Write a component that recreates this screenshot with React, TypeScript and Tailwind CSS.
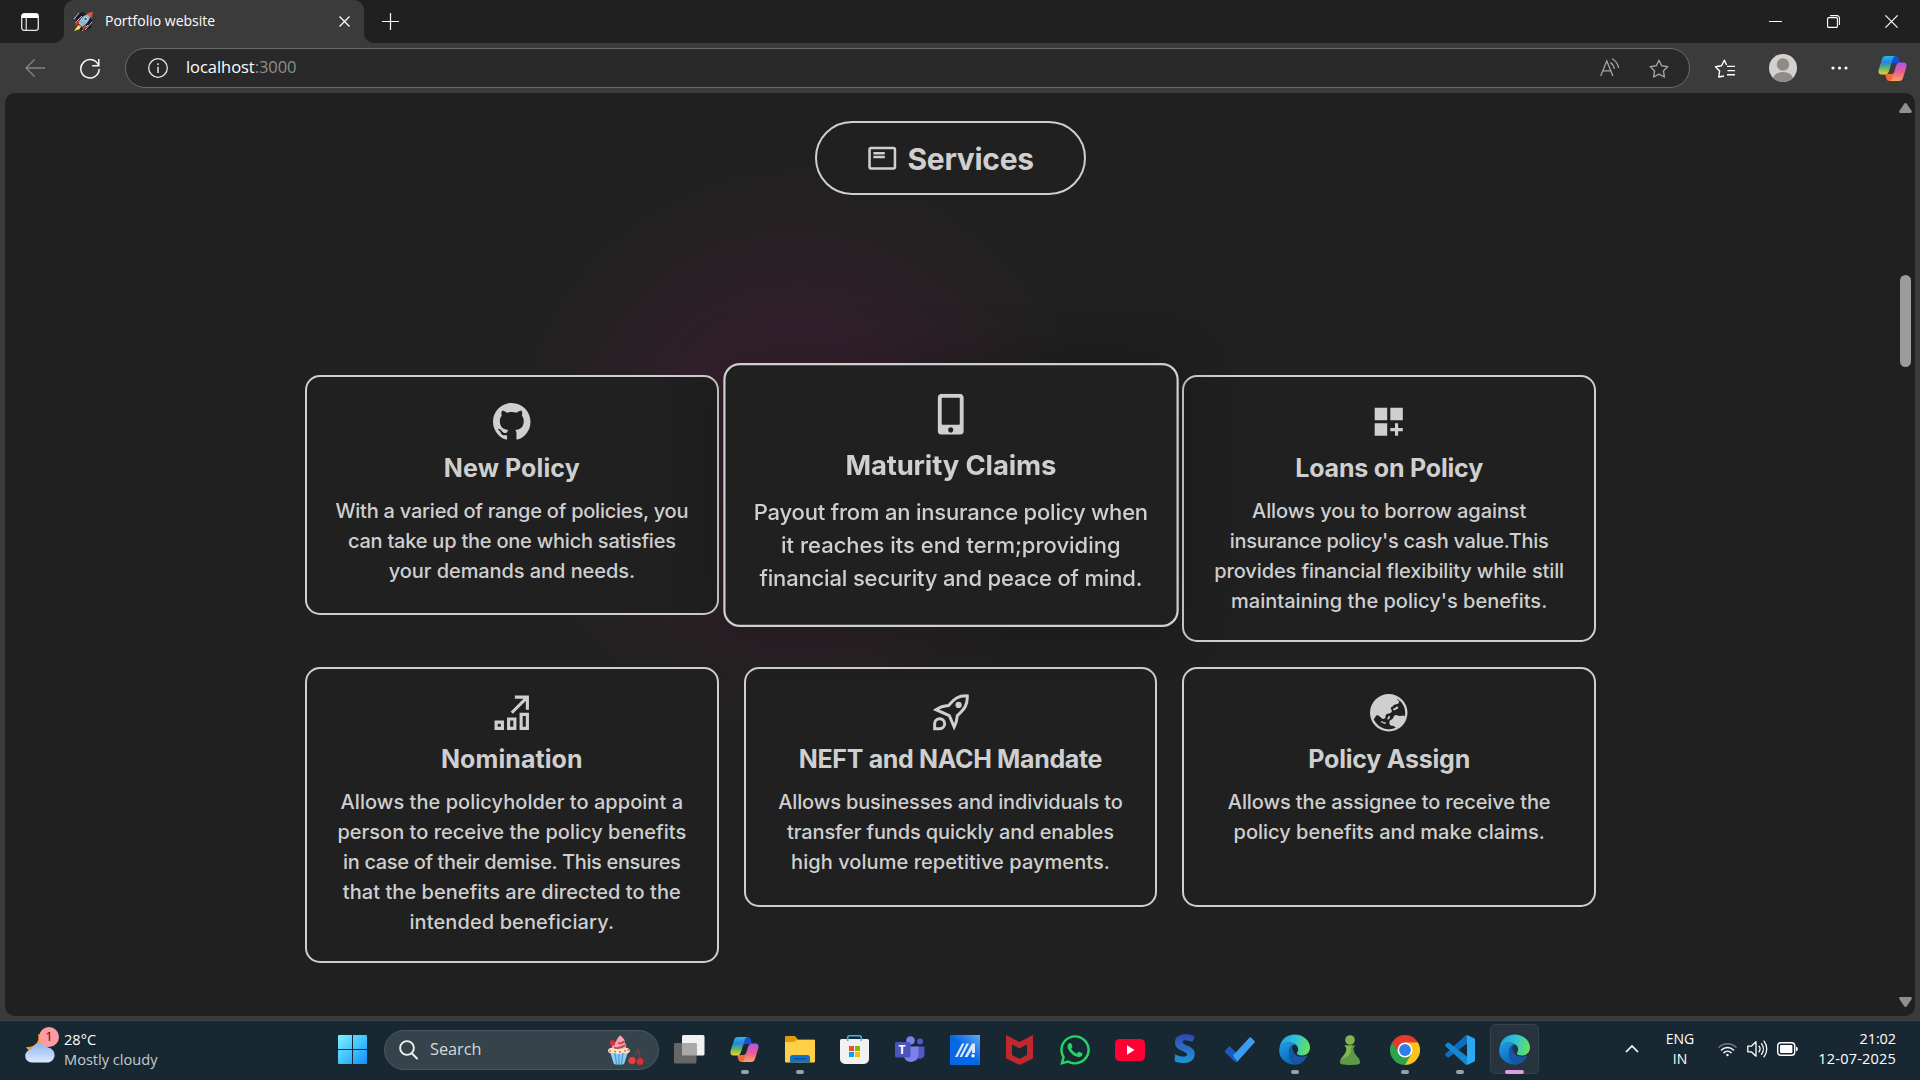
import type { ReactNode } from "react";
import { MdOutlineFeaturedPlayList, MdDashboardCustomize } from "react-icons/md";
import { BsGithub, BsGlobeAsiaAustralia } from "react-icons/bs";
import { FaMobileAlt, FaWhatsapp } from "react-icons/fa";

/* ---------- Browser chrome ---------- */

function RocketFavicon() {
  return (
    <svg width="21" height="21" viewBox="0 0 21 21">
      <path d="M3 4 10 1 19 9 18 17 10 20 3 17Z" fill="#17182a" />
      <path d="M1 8 6 2M2 12 9 5M12 19l7-8M9 20l6-6" stroke="#c9cad6" strokeWidth="1" />
      <path d="M5 12C7 7 12 3 17 3c1 5-3 10-8 13Z" fill="#8fb8cf" />
      <path d="M14 2.500 20 .500 18.500 7C17 6 15 4.500 14 2.500Z" fill="#e8533c" />
      <path d="M6 9 2.500 11 2 15l4-2ZM9 16l1 4 3-3v-4Z" fill="#c9362c" />
      <circle cx="12.500" cy="8" r="1.800" fill="#2d5f92" stroke="#e3eef5" strokeWidth=".8" />
      <path d="M5 14 1 20l6-2 1-3Z" fill="#f5d64b" />
    </svg>
  );
}

function CopilotIcon({ id }: { id: string }) {
  return (
    <svg width="29" height="27" viewBox="0 0 29 27">
      <defs>
        <linearGradient id={`${id}a`} x1="0" y1="0" x2="0" y2="1">
          <stop offset="0" stopColor="#2cb5e8" />
          <stop offset=".35" stopColor="#2486dd" />
          <stop offset=".65" stopColor="#5fb869" />
          <stop offset="1" stopColor="#f6cf2d" />
        </linearGradient>
        <linearGradient id={`${id}b`} x1="0" y1="0" x2="0" y2="1">
          <stop offset="0" stopColor="#a855f0" />
          <stop offset=".5" stopColor="#ea5c93" />
          <stop offset="1" stopColor="#fba45e" />
        </linearGradient>
      </defs>
      <path d="M14 1h3.500c2 0 2.800 1.200 3.300 3l1 4H16c-2 0-3 1-3.500 3Z" fill="#1b4fd0" />
      <path d="M15 26h-3.500c-2 0-2.800-1.200-3.300-3l-1-4H13c2 0 3-1 3.500-3Z" fill="#ef6a3c" />
      <path d="M8 1h9.500c-2 .3-2.500 2-3 3.500L11 16c-.8 2.500-2 3.500-4.500 3.500H3.600C1 19.500 0 17.500.6 15L4 4c.6-2 1.800-3 4-3Z" fill={`url(#${id}a)`} />
      <path d="M21 26h-9.500c2-.3 2.500-2 3-3.500L18 11c.8-2.500 2-3.500 4.500-3.500h2.900c2.600 0 3.600 2 3 4.500L25 23c-.6 2-1.800 3-4 3Z" fill={`url(#${id}b)`} />
    </svg>
  );
}

const STAR = "M11 2.200l2.700 5.500 6.100.9-4.400 4.300 1 6.100L11 16.100 5.600 19l1-6.100L2.200 8.600l6.100-.9Z";

function TitleBar() {
  return (
    <div className="flex h-[43px] bg-[#202020] text-white">
      <div className="flex h-full w-[64px] bg-[#3b3b3b]">
        <div className="flex h-full w-full items-center rounded-br-[10px] bg-[#202020] pl-[21px]">
          <svg width="18" height="18" viewBox="0 0 18 18" fill="none">
            <rect x=".7" y=".7" width="16.600" height="16.600" rx="2.500" stroke="#e6e6e6" strokeWidth="1.300" />
            <path d="M.7 5V3A2.300 2.300 0 0 1 3 .7h12A2.300 2.300 0 0 1 17.300 3v2Z" fill="#fff" />
            <path d="M5.200 5v12" stroke="#e6e6e6" strokeWidth="1.200" />
          </svg>
        </div>
      </div>
      <div className="flex h-full w-[300px] items-center rounded-t-[10px] bg-[#3b3b3b] pb-px pl-[9px]">
        <RocketFavicon />
        <span className="ml-[11px] flex-1 pb-[2px] text-[14px] whitespace-nowrap">Portfolio website</span>
        <svg className="mr-[14px]" width="11" height="11" viewBox="0 0 11 11" stroke="#fff" strokeWidth="1.300">
          <path d="M.5.5l10 10M10.500.5l-10 10" />
        </svg>
      </div>
      <div className="h-full flex-1 bg-[#3b3b3b]">
        <div className="flex h-full w-full items-center rounded-bl-[10px] bg-[#202020] pb-px">
          <svg className="ml-[18px]" width="17" height="17" viewBox="0 0 17 17" stroke="#fff" strokeWidth="1.200">
            <path d="M8.500 0v17M0 8.500h17" />
          </svg>
          <div className="ml-auto flex items-center pr-[22px]">
            <div className="mr-[45px] h-px w-[13px] bg-white" />
            <svg className="mr-[45px]" width="13" height="13" viewBox="0 0 13 13" fill="none" stroke="#fff" strokeWidth="1.100">
              <rect x=".6" y="2.600" width="9.800" height="9.800" rx="1" />
              <path d="M3 .6h7a2.400 2.400 0 0 1 2.400 2.400v7" />
            </svg>
            <svg width="13" height="13" viewBox="0 0 13 13" stroke="#fff" strokeWidth="1.200">
              <path d="M.4.4l12.200 12.200M12.600.4.4 12.600" />
            </svg>
          </div>
        </div>
      </div>
    </div>
  );
}

function AddressRow() {
  return (
    <div className="flex h-[50px] items-center">
      <svg className="ml-[25px]" width="20" height="18" viewBox="0 0 20 18" fill="none" stroke="#858585" strokeWidth="1.300">
        <path d="M20 9H1M9.500.5 1 9l8.500 8.500" />
      </svg>
      <svg className="ml-[35px]" width="20" height="21" viewBox="0 0 20 21" fill="none" stroke="#f5f5f5" strokeWidth="1.500">
        <path d="M18.600 7.500A9.200 9.200 0 1 0 19.200 11M18.800 1v6.700h-6.500" />
      </svg>
      <div className="ml-[25px] flex h-[40px] w-[1565px] items-center rounded-full border border-[#6b6b6b] bg-[#292929]">
        <svg className="ml-[22px]" width="20" height="20" viewBox="0 0 20 20" fill="none" stroke="#e8e8e8" strokeWidth="1.300">
          <circle cx="10" cy="10" r="9.300" />
          <path d="M10 8.800V15M10 5.200v1.700" strokeWidth="1.500" />
        </svg>
        <span className="ml-[18px] pb-px text-[16.5px] tracking-[-0.05px] text-white">
          localhost<span className="text-[#8f8f8f]">:3000</span>
        </span>
        <div className="ml-auto flex items-center pr-[19px] text-[#a3a3a3]">
          <svg className="mr-[28px]" width="20" height="20" viewBox="0 0 20 20" fill="none" stroke="currentColor" strokeWidth="1.300">
            <path d="M.7 18 6.800 3l6.100 15M2.800 12.800h8" />
            <path d="M10.500 4.600a9 9 0 0 1 3.800 6.200M12 .8a13 13 0 0 1 6.600 9" />
          </svg>
          <svg width="22" height="21" viewBox="0 0 22 21" fill="none" stroke="currentColor" strokeWidth="1.400" strokeLinejoin="round">
            <path d={STAR} />
          </svg>
        </div>
      </div>
      <svg className="ml-[24px]" width="22" height="21" viewBox="0 0 22 21" fill="none" stroke="#fff" strokeWidth="1.400" strokeLinejoin="round">
        <path d="M10 18 4.800 19l.8-6L1.500 8.700l6-1L10.300 2.200l2.300 4.800M13 8.400h8M13.500 12.600H21M13 16.800h8" />
      </svg>
      <svg className="ml-[33px]" width="28" height="28" viewBox="0 0 28 28">
        <clipPath id="avatarClip"><circle cx="14" cy="14" r="14" /></clipPath>
        <circle cx="14" cy="14" r="14" fill="#d3d0cd" />
        <g clipPath="url(#avatarClip)" fill="#8f8b87">
          <circle cx="14" cy="10.500" r="6.200" />
          <ellipse cx="14" cy="25" rx="10" ry="7" />
        </g>
      </svg>
      <svg className="ml-[34px]" width="17" height="4" viewBox="0 0 17 4" fill="#fff">
        <circle cx="2" cy="2" r="1.600" /><circle cx="8.500" cy="2" r="1.600" /><circle cx="15" cy="2" r="1.600" />
      </svg>
      <div className="ml-[30px]"><CopilotIcon id="side" /></div>
    </div>
  );
}

/* ---------- Services page ---------- */

function GrowthIcon() {
  return (
    <svg width="37.500" height="37.500" viewBox="0 0 24 24" fill="none" stroke="currentColor" strokeWidth="2">
      <path d="M2 18h4v4H2zM10 16h4v6h-4zM18 13h4v9h-4zM14 2h8v8M22 2 12 12" />
    </svg>
  );
}

function LaunchIcon() {
  return (
    <svg width="37.500" height="37.500" viewBox="0 0 24 24" fill="none" stroke="currentColor" strokeWidth="1.900">
      <path d="M22.600 1.200C16.500 1 14.500 3 10.700 7.300 7 7.500 5 8.300 2.500 10l8.600 3.900L14.200 21.200c1.200-2.300 1.800-4.600 2-7.400C20.800 9.800 22.800 7 22.600 1.200Z" />
      <path d="M1.700 22.200v-3.300a3.200 3.200 0 1 1 3.200 3.300Z" />
      <circle cx="17" cy="7" r="2" fill="currentColor" stroke="none" />
    </svg>
  );
}

type Line = { text: string; fit: string };
type CardProps = { icon: ReactNode; title: string; titleFit: string; lines: Line[]; className?: string };

function ServiceCard({ icon, title, titleFit, lines, className = "" }: CardProps) {
  return (
    <div className={`min-h-[240px] self-start rounded-[15px] border-2 border-[#cfcfcf] bg-[#202020] px-[25px] text-center whitespace-nowrap text-[#cfcfcf] ${className}`}>
      <div className="flex h-[38px] justify-center">{icon}</div>
      <h3 className={`mt-[9px] text-[25px] leading-[37px] font-bold ${titleFit}`}>{title}</h3>
      <p className="mt-[9px] text-[20px] leading-[30px] font-[450]">
        {lines.map((l) => (
          <span key={l.text} className={`-mx-4 block ${l.fit}`}>{l.text}</span>
        ))}
      </p>
    </div>
  );
}

const cards: CardProps[] = [
  {
    icon: <BsGithub size={37.5} />,
    title: "New Policy",
    titleFit: "tracking-[0.1px]",
    className: "pt-[26px] pb-[24px]",
    lines: [
      { text: "With a varied of range of policies, you", fit: "tracking-[-0.23px]" },
      { text: "can take up the one which satisfies", fit: "tracking-[-0.23px]" },
      { text: "your demands and needs.", fit: "tracking-[-0.07px]" },
    ],
  },
  {
    icon: <FaMobileAlt size={37.5} />,
    title: "Maturity Claims",
    titleFit: "tracking-[-0.14px]",
    className: "relative z-10 scale-110 pt-[25.5px] pb-[24px] shadow-[0_0_50px_rgba(0,0,0,0.25)]",
    lines: [
      { text: "Payout from an insurance policy when", fit: "tracking-[-0.17px]" },
      { text: "it reaches its end term;providing", fit: "tracking-[0px]" },
      { text: "financial security and peace of mind.", fit: "tracking-[-0.14px]" },
    ],
  },
  {
    icon: <MdDashboardCustomize size={37.5} />,
    title: "Loans on Policy",
    titleFit: "tracking-[-0.2px]",
    className: "pt-[26px] pb-[24px]",
    lines: [
      { text: "Allows you to borrow against", fit: "tracking-[-0.08px]" },
      { text: "insurance policy's cash value.This", fit: "tracking-[-0.27px]" },
      { text: "provides financial flexibility while still", fit: "tracking-[-0.12px]" },
      { text: "maintaining the policy's benefits.", fit: "tracking-[0.01px]" },
    ],
  },
  {
    icon: <GrowthIcon />,
    title: "Nomination",
    titleFit: "tracking-[0.08px]",
    className: "pt-[25px] pb-[24px]",
    lines: [
      { text: "Allows the policyholder to appoint a", fit: "tracking-[0.04px]" },
      { text: "person to receive the policy benefits", fit: "tracking-[0.02px]" },
      { text: "in case of their demise. This ensures", fit: "tracking-[-0.35px]" },
      { text: "that the benefits are directed to the", fit: "tracking-[0.05px]" },
      { text: "intended beneficiary.", fit: "tracking-[0.1px]" },
    ],
  },
  {
    icon: <LaunchIcon />,
    title: "NEFT and NACH Mandate",
    titleFit: "tracking-[-0.34px]",
    className: "pt-[25px] pb-[24px]",
    lines: [
      { text: "Allows businesses and individuals to", fit: "tracking-[-0.15px]" },
      { text: "transfer funds quickly and enables", fit: "tracking-[-0.12px]" },
      { text: "high volume repetitive payments.", fit: "tracking-[0.05px]" },
    ],
  },
  {
    icon: <BsGlobeAsiaAustralia size={37.5} />,
    title: "Policy Assign",
    titleFit: "tracking-[-0.22px]",
    className: "pt-[25px] pb-[24px]",
    lines: [
      { text: "Allows the assignee to receive the", fit: "tracking-[-0.1px]" },
      { text: "policy benefits and make claims.", fit: "tracking-[-0.01px]" },
    ],
  },
];

function ServicesPage() {
  return (
    <div className="relative mr-[5px] ml-[5px] h-[923px] overflow-hidden rounded-[10px] bg-[#202020] font-['Inter',sans-serif]">
      <div className="absolute top-[52px] left-[487px] h-[610px] w-[610px] rounded-full bg-[radial-gradient(closest-side,#3b2033_0%,#382030_20%,#32202c_40%,#2a2026_60%,#242022_80%,#202020_100%)]" />
      <div className="relative flex flex-col items-start pt-[28px] pl-[300px]">
        <div className="ml-[510px] flex h-[74px] w-[271px] items-center rounded-full border-2 border-[#cfcfcf] bg-[#202020] pl-[50px] text-[#cfcfcf]">
          <MdOutlineFeaturedPlayList size={30.5} />
          <h2 className="ml-[10px] pt-[2px] text-[30px] leading-[40px] font-bold tracking-[-0.3px]">Services</h2>
        </div>
        <div className="mt-[180px] grid w-[1291px] grid-cols-3 gap-[25px]">
          {cards.map((c) => (
            <ServiceCard key={c.title} {...c} />
          ))}
        </div>
      </div>
      <div className="absolute top-0 right-0 flex h-full w-[20px] flex-col items-center pt-[10px] pb-[9px]">
        <svg width="13" height="10" viewBox="0 0 13 10" fill="#8f8f8f"><path d="M6.500 0c.6 0 1 .3 1.300.8l4.700 7c.7 1.200.2 2.200-1 2.200H1.500C.2 10-.2 9 .5 7.800l4.700-7C5.500.3 5.900 0 6.500 0Z" /></svg>
        <div className="mt-[162px] h-[92px] w-[11px] rounded-full bg-[#9b9b9b]" />
        <svg className="mt-auto" width="13" height="10" viewBox="0 0 13 10" fill="#8f8f8f"><path d="M6.500 10c.6 0 1-.3 1.300-.8l4.700-7C13.200 1 12.700 0 11.500 0h-10C.2 0-.2 1 .5 2.200l4.700 7c.3.500.7.8 1.300.8Z" /></svg>
      </div>
    </div>
  );
}

/* ---------- Taskbar icons ---------- */

function WeatherIcon() {
  return (
    <div className="relative h-[36px] w-[34px]">
      <svg className="absolute top-[6px] left-0" width="31" height="30" viewBox="0 0 31 30">
        <defs>
          <linearGradient id="cloudFill" x1="0" y1="0" x2="0" y2="1">
            <stop offset="0" stopColor="#8db4f2" /><stop offset="1" stopColor="#dbe8fc" />
          </linearGradient>
        </defs>
        <path d="M13 1c2 8-3 14-12 13 3 7 14 6 17-1S18 2 13 1Z" fill="#f2a21c" />
        <path d="M7 29.500a6.500 6.500 0 0 1-.5-13A9 9 0 0 1 23 14.500a7.600 7.600 0 0 1 .5 15Z" fill="url(#cloudFill)" />
      </svg>
      <div className="absolute top-0 left-[14px] flex size-[20px] items-center justify-center rounded-full bg-[#ff99a4] text-[13px] text-[#222]">1</div>
    </div>
  );
}

function WindowsIcon() {
  return (
    <svg width="29" height="29" viewBox="0 0 29 29">
      <defs>
        <linearGradient id="winFill" x1="0" y1="0" x2="1" y2="1">
          <stop offset="0" stopColor="#7df0ff" /><stop offset=".5" stopColor="#45c4fb" /><stop offset="1" stopColor="#0e8ffb" />
        </linearGradient>
      </defs>
      <path d="M1 0h13v14H0V1a1 1 0 0 1 1-1ZM15 0h13a1 1 0 0 1 1 1v13H15ZM0 15h14v14H1a1 1 0 0 1-1-1ZM15 15h14v13a1 1 0 0 1-1 1H15Z" fill="url(#winFill)" />
    </svg>
  );
}

function DessertIcon() {
  return (
    <svg width="37" height="30" viewBox="0 0 37 30">
      <path d="M3 17h18l-3.500 11c-.5 1-1.500 1.500-3 1.500h-5c-1.500 0-2.500-.5-3-1.500Z" fill="#8ccdf2" />
      <path d="M8 18l1.500 11M12 18v11M16 18l-1.500 11" stroke="#4597d8" strokeWidth="1.200" />
      <path d="M1 15.500c0-2.500 5-3.500 11-3.500s11 1 11 3.500-4 3.500-6 2.500-3 1-5 1-4-1.500-6-1-5 .5-5-2.500Z" fill="#ffe6bd" />
      <path d="M3 16h.1M8 16.500h.1M13 17h.1M18 16h.1M21 15h.1" stroke="#ef5872" strokeWidth="1.800" strokeLinecap="round" />
      <path d="M5 12c0-3 3-4 4-5.500C10 4 11 2 13 .5c1 0 2 1.500 3.500 3 2 2 .5 3.500 1.500 4.500s2 3.500 0 5-13 1-13-1Z" fill="#ff9eb3" />
      <path d="M7 12.500c4 1.500 8 0 11-2.500M11 8c3 1 4.500 0 6-1.500" fill="none" stroke="#a9503f" strokeWidth="1.800" />
      <circle cx="5.500" cy="8" r="2.700" fill="#df2c3c" />
      <path d="M31 14c-1 4-3 6-5 9M31 14c2 4 2 6 2 10" fill="none" stroke="#a13535" />
      <circle cx="25" cy="25.500" r="3.600" fill="#ea3f3b" /><circle cx="33" cy="26.500" r="3.400" fill="#d8302f" />
    </svg>
  );
}

function TaskViewIcon() {
  return (
    <svg width="31" height="29" viewBox="0 0 31 29">
      <rect x="8" y="0" width="22.500" height="20.500" rx="1.500" fill="#f1f1f1" />
      <rect x="0" y="8" width="22.500" height="20.500" rx="1.500" fill="#666" />
      <path d="M8 8h14.500v12.500H8Z" fill="#a9a9a9" />
    </svg>
  );
}

function FolderIcon() {
  return (
    <svg width="30" height="27" viewBox="0 0 30 27">
      <path d="M1 0h9l3 3.500h16a1 1 0 0 1 1 1V10H0V1a1 1 0 0 1 1-1Z" fill="#e09b07" />
      <path d="M12 4h18v21.500a1 1 0 0 1-1 1H1a1 1 0 0 1-1-1V6h9Z" fill="#ffcf48" />
      <path d="M5 26.500v-5a2.500 2.500 0 0 1 2.500-2.500h15a2.500 2.500 0 0 1 2.500 2.500v5Z" fill="#1173c7" />
      <path d="M8.500 22.700h13" stroke="#0a4a8f" strokeWidth="1.200" />
    </svg>
  );
}

function StoreIcon() {
  return (
    <svg width="29" height="29" viewBox="0 0 29 29">
      <path d="M7.700 6V2.500A1.700 1.700 0 0 1 9.400.8h10.200a1.700 1.700 0 0 1 1.700 1.700V6" fill="none" stroke="#35b8ee" strokeWidth="1.600" />
      <path d="M0 5.500A1.500 1.500 0 0 1 1.500 4h26A1.500 1.500 0 0 1 29 5.500V24a5 5 0 0 1-5 5H5a5 5 0 0 1-5-5Z" fill="#f1f1f1" />
      <path d="M7.700 4v2M21.300 4v2" stroke="#35b8ee" strokeWidth="1.600" />
      <path d="M9 11h5v5H9Z" fill="#f25022" /><path d="M15 11h5v5h-5Z" fill="#7fba00" />
      <path d="M9 17h5v5H9Z" fill="#00a4ef" /><path d="M15 17h5v5h-5Z" fill="#ffb900" />
    </svg>
  );
}

function TeamsIcon() {
  return (
    <div className="relative h-[27px] w-[30px]">
      <svg className="absolute inset-0" width="30" height="27" viewBox="0 0 30 27">
        <circle cx="25" cy="5.500" r="3" fill="#5059c9" />
        <path d="M20 10.500h8.500a1 1 0 0 1 1 1V18a5 5 0 0 1-9.500 2Z" fill="#5059c9" />
        <circle cx="15.500" cy="4.500" r="4.300" fill="#7b83eb" />
        <path d="M9 10.500h13.500a1 1 0 0 1 1 1V19a7.500 7.500 0 0 1-14.500 2Z" fill="#7b83eb" />
        <rect y="6" width="15.500" height="15.500" rx="1.500" fill="#4b53bc" />
      </svg>
      <span className="absolute top-[6px] left-0 w-[15px] text-center text-[12px] leading-[15px] font-bold text-white">T</span>
    </div>
  );
}

function SlashTileIcon() {
  return (
    <svg width="30" height="30" viewBox="0 0 30 30">
      <defs>
        <linearGradient id="tileFill" x1="0" y1="1" x2="1" y2="0">
          <stop offset=".5" stopColor="#0567e3" /><stop offset="1" stopColor="#63a6f8" />
        </linearGradient>
      </defs>
      <path d="M0 0h30v30H0Z" fill="url(#tileFill)" />
      <path d="M5 22 12 8.500h2.500L7.500 22ZM9.500 22l7-13.500H19L12 22ZM22 8.500h3V18h-3v-3.500L17.500 22h-3Z" fill="#d9e8fd" />
      <circle cx="23" cy="20.800" r="1.700" fill="#fff" />
    </svg>
  );
}

function ShieldIcon() {
  return (
    <svg width="27" height="30" viewBox="0 0 27 30">
      <path d="M0 0 13.500 7 27 0v23.500L13.500 30 0 23.500ZM6 9.500v10.500l7.500 3.700L21 20V9.500l-7.500 4Z" fill="#c1272d" fillRule="evenodd" />
    </svg>
  );
}

function VideoIcon() {
  return (
    <svg width="30" height="22" viewBox="0 0 30 22">
      <rect width="30" height="22" rx="4.500" fill="#ff0033" />
      <path d="M12 6.300v9.400l7.500-4.700Z" fill="#fff" />
    </svg>
  );
}

function CheckIcon() {
  return (
    <svg width="30" height="25" viewBox="0 0 30 25">
      <path d="M4.500 9 0 13.700a1 1 0 0 0 0 1.400L9.500 24.500 14.500 19Z" fill="#195abd" />
      <path d="M9.500 24.500a2 2 0 0 0 3 0L29.500 5.500a1 1 0 0 0 0-1.400L26 .6a1 1 0 0 0-1.400 0L8 18.500l4 6Z" fill="#3c9cf0" />
    </svg>
  );
}

function EdgeIcon({ id }: { id: string }) {
  return (
    <svg width="31" height="31" viewBox="0 0 31 31">
      <defs>
        <linearGradient id={`${id}a`} x1="0" y1=".3" x2="1" y2=".5">
          <stop offset="0" stopColor="#1f9fe0" /><stop offset=".5" stopColor="#2fc3d8" /><stop offset="1" stopColor="#66e25a" />
        </linearGradient>
        <linearGradient id={`${id}b`} x1="0" y1="0" x2=".6" y2="1">
          <stop offset="0" stopColor="#1ea2ea" /><stop offset="1" stopColor="#0b62b8" />
        </linearGradient>
      </defs>
      <path d="M.5 14C1.500 5.500 8 .5 15.500.5 24.500.5 31 7 31 13.500c0 5-3.800 8-8 8-3.500 0-5.200-1.200-5.200-2.200 0-.8 1.400-1.500 1.400-4 0-3.500-4-6.800-9-6.800-4.500 0-8 2-9.700 5.500Z" fill={`url(#${id}a)`} />
      <path d="M.3 15C1 11 5 8.400 10 8.400c2.500 0 5 .8 6.800 2.200-3-.6-6.800 2.900-6.800 8.400 0 6 4 10.500 8.500 11.500C8 32-1 24.500.3 15Z" fill={`url(#${id}b)`} />
      <path d="M10 18.500c0-3.500 1.500-6.500 4-7.700-1.200 3.200-.5 6 1.500 8.700 2.500 3.300 7.500 4.300 11.500 2.200.8-.4 1.500 0 1 .9-2 4-5.500 7-9.500 8C13.500 29.500 10 24.500 10 18.500Z" fill="#1557a5" />
    </svg>
  );
}

function PawnIcon() {
  return (
    <svg width="20" height="30" viewBox="0 0 20 30">
      <circle cx="10" cy="5" r="4.800" fill="#81b64c" />
      <path d="M4.500 10.500h11l-2 2.500c0 5 2.500 7 5 10 1.200 1.500 1.500 3 1.500 5 0 1-3 2-10 2S0 29 0 28c0-2 .3-3.500 1.500-5 2.500-3 5-5 5-10Z" fill="#5d9948" />
      <path d="M6 10.500h7l-2 2.500c0 5-.5 8-7 10-2 .7-3 1-3.500 2.500.2-1 .4-1.700 1-2.500 2.500-3 5-5 5-10l-2-2.500Z" fill="#81b64c" />
    </svg>
  );
}

function ChromeIcon() {
  return (
    <svg width="30" height="30" viewBox="-15 -15 30 30">
      <path d="M0 0-13-7.500A15 15 0 0 1 13-7.500Z" fill="#e33b2e" />
      <path d="M0 0 13-7.500A15 15 0 0 1 0 15Z" fill="#fcc31e" />
      <path d="M0 0V15A15 15 0 0 1-13-7.500Z" fill="#2ba24c" />
      <path d="M0-7.500H13L6.500 3.750Z" fill="#fcc31e" />
      <path d="M6.500 3.750 0 15-6.500 3.750Z" fill="#2ba24c" />
      <path d="M-6.500 3.750-13-7.500H0Z" fill="#e33b2e" />
      <path d="M-13-7.500-6.500 3.750-7.500 0Z" fill="#2ba24c" />
      <circle r="7.500" fill="#fff" /><circle r="5.900" fill="#2f7de9" />
    </svg>
  );
}

function CodeIcon() {
  return (
    <svg width="30" height="30" viewBox="0 0 30 30">
      <path d="M22 0 29 3.200a1.500 1.500 0 0 1 1 1.500v20.600a1.500 1.500 0 0 1-1 1.500L22 30Z" fill="#2aa8f2" />
      <path d="M22 0v8.500L4 22.200a1.300 1.300 0 0 1-1.600 0L.5 20.500a1.200 1.200 0 0 1 0-1.800L20.500.5Z" fill="#0a70bd" />
      <path d="M22 30v-8.500L4 7.800a1.300 1.300 0 0 0-1.600 0L.5 9.500a1.200 1.200 0 0 0 0 1.800L20.500 29.500Z" fill="#1487d4" />
    </svg>
  );
}

function Slot({ children, open, active }: { children: ReactNode; open?: boolean; active?: boolean }) {
  return (
    <div className="relative flex h-full w-[55px] items-center justify-center pb-[2px]">
      {active && <div className="absolute inset-x-[3px] top-[3px] h-[50px] rounded-[5px] border border-[#35424b] bg-[#27343d]" />}
      <div className="relative">{children}</div>
      {open && <div className="absolute bottom-[6px] h-[4px] w-[8px] rounded-full bg-[#9aa1a5]" />}
      {active && <div className="absolute bottom-[6px] h-[4px] w-[19px] rounded-full bg-[#dd9fe3]" />}
    </div>
  );
}

function Taskbar() {
  return (
    <div className="flex h-[60px] items-center border-t border-[#3b474e] bg-[#182832] text-white">
      <div className="flex h-full w-[325px] items-start pt-[6px] pl-[25px]">
        <WeatherIcon />
        <div className="ml-[5px] pt-[2px] text-[14.6px] leading-[20px] whitespace-nowrap">
          <div>28°C</div>
          <div className="text-[#c6cbce]">Mostly cloudy</div>
        </div>
      </div>
      <Slot><WindowsIcon /></Slot>
      <div className="mr-[3px] mb-[2px] ml-[4px] flex h-[40px] w-[275px] items-center rounded-full border border-[#4b575e] bg-[#35434b] pr-[14px] pl-[14px]">
        <svg width="19" height="20" viewBox="0 0 19 20" fill="none" stroke="#f0f0f0" strokeWidth="1.900" strokeLinecap="round">
          <circle cx="8" cy="8" r="6.900" /><path d="m13 13.500 5 5" />
        </svg>
        <span className="ml-[12px] text-[16.3px] text-[#d5d9db]">Search</span>
        <div className="ml-auto"><DessertIcon /></div>
      </div>
      <Slot><TaskViewIcon /></Slot>
      <Slot open><CopilotIcon id="task" /></Slot>
      <Slot open><FolderIcon /></Slot>
      <Slot><StoreIcon /></Slot>
      <Slot><TeamsIcon /></Slot>
      <Slot><SlashTileIcon /></Slot>
      <Slot><ShieldIcon /></Slot>
      <Slot><FaWhatsapp size={34} color="#25d366" /></Slot>
      <Slot><VideoIcon /></Slot>
      <Slot>
        <span className="mb-[3px] block bg-linear-to-b from-[#3232a8] to-[#06a4dc] bg-clip-text text-[40px] leading-[40px] font-extrabold text-transparent">S</span>
      </Slot>
      <Slot><CheckIcon /></Slot>
      <Slot open><EdgeIcon id="edgeOne" /></Slot>
      <Slot><PawnIcon /></Slot>
      <Slot open><ChromeIcon /></Slot>
      <Slot open><CodeIcon /></Slot>
      <Slot active><EdgeIcon id="edgeTwo" /></Slot>
      <div className="ml-auto flex items-center pr-[24px] pb-[3px] text-[14.5px] leading-[20px]">
        <svg width="14" height="8" viewBox="0 0 14 8" fill="none" stroke="#fff" strokeWidth="1.700"><path d="m1 7 6-6 6 6" /></svg>
        <div className="ml-[26px] w-[30px] text-center text-[14px]"><div>ENG</div><div>IN</div></div>
        <svg className="ml-[23px]" width="19" height="15" viewBox="0 0 19 15" fill="none" stroke="#fff" strokeWidth="1.500" strokeLinecap="round">
          <path d="M1 5.200a12 12 0 0 1 17 0" stroke="#6f7b82" /><path d="M3.500 8a8.500 8.500 0 0 1 12 0M6 10.600a5 5 0 0 1 7 0" /><circle cx="9.500" cy="13" r="1.200" fill="#fff" stroke="none" />
        </svg>
        <svg className="ml-[10px]" width="21" height="18" viewBox="0 0 21 18" fill="none" stroke="#fff" strokeWidth="1.300" strokeLinejoin="round" strokeLinecap="round">
          <path d="M.8 6.200h3.500L9 1.800v14.400l-4.700-4.400H.8ZM12 6.200a4.500 4.500 0 0 1 0 5.600M14.500 3.700a8.500 8.500 0 0 1 0 10.600M17 1.200a12.500 12.500 0 0 1 0 15.600" />
        </svg>
        <svg className="ml-[9px]" width="21" height="14" viewBox="0 0 21 14"><rect x=".7" y=".7" width="17" height="12.600" rx="3" fill="none" stroke="#fff" strokeWidth="1.400" /><rect x="3" y="3" width="12.400" height="8" rx="1" fill="#fff" /><path d="M19 4.500a2.600 2.600 0 0 1 0 5Z" fill="#fff" /></svg>
        <div className="ml-[19px] w-[79px] text-right"><div className="tracking-[-0.1px]">21:02</div><div className="tracking-[0.2px]">12-07-2025</div></div>
      </div>
    </div>
  );
}

export default function App() {
  return (
    <div className="flex h-[1080px] w-[1920px] flex-col overflow-hidden bg-[#3b3b3b] font-['Open_Sans',sans-serif]">
      <TitleBar />
      <AddressRow />
      <ServicesPage />
      <div className="mt-auto"><Taskbar /></div>
    </div>
  );
}
